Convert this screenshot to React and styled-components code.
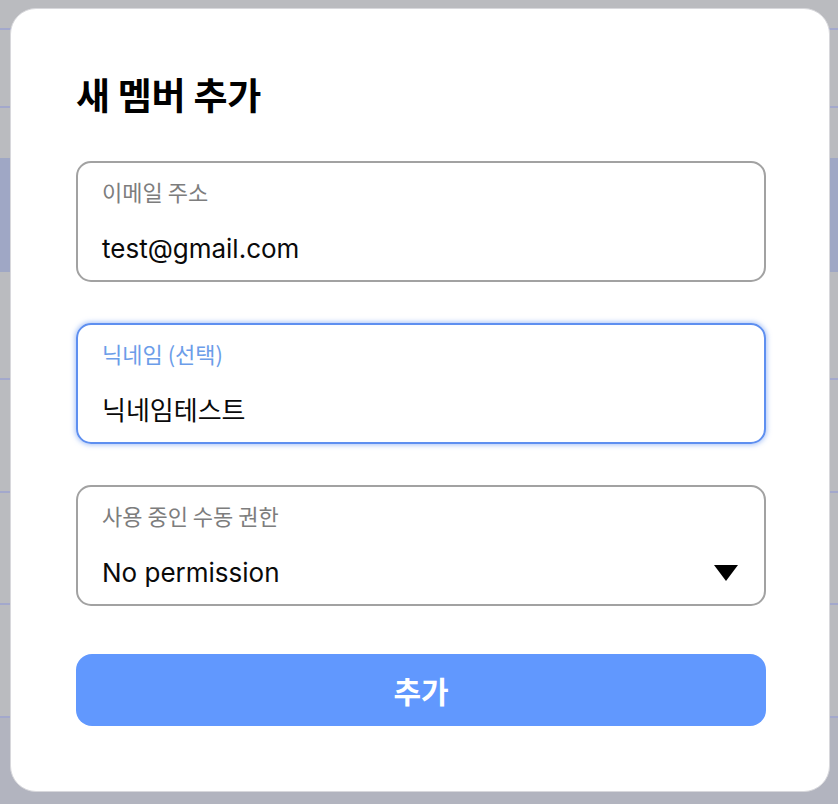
import React from 'react'
import styled, { createGlobalStyle } from 'styled-components'

const GlobalStyle = createGlobalStyle`
  html, body {
    margin: 0;
    padding: 0;
    background: #babbbf;
  }
  * {
    box-sizing: border-box;
  }
`

const sans = `Inter, "Noto Sans CJK KR", sans-serif`
const kr = `"Noto Sans CJK KR", "Noto Sans", sans-serif`

export const Backdrop = styled.div`
  position: fixed;
  inset: 0;
  display: flex;
  flex-direction: column;
  background: #babbbf;
`
export const TableRow = styled.div`
  height: ${p => p.h}px;
  flex-shrink: 0;
  background: ${p => (p.selected ? '#9fa7c5' : p.tail ? '#b2b4bf' : '#babbbf')};
  border-bottom: ${p => (p.line ? '2px solid #a3a8cc' : 'none')};
`
export const Overlay = styled.div`
  position: fixed;
  inset: 0;
  display: flex;
  padding: 8px 8px 12px 10px;
`
export const Modal = styled.div`
  width: 820px;
  height: 784px;
  background: #fff;
  border: 1px solid #d8d8dc;
  border-radius: 26px;
  padding: 59px 63px 0 65px;
  display: flex;
  flex-direction: column;
`
export const Title = styled.h2`
  margin: 0 0 41px;
  font-family: ${kr};
  font-weight: 700;
  font-size: 37px;
  line-height: 52px;
  color: #000;
  letter-spacing: -0.3px;
`
export const Field = styled.div`
  height: 121px;
  border: 2px solid ${p => (p.focused ? '#5e8ff0' : '#a2a2a2')};
  border-radius: 15px;
  box-shadow: ${p => (p.focused ? '0 0 5px 1px rgba(94,143,240,0.55)' : 'none')};
  padding: 12px 24px 0 24px;
  margin-bottom: ${p => p.gap}px;
  display: flex;
  flex-direction: column;
`
export const Label = styled.div`
  font-family: ${kr};
  font-size: 22px;
  line-height: 32px;
  color: ${p => (p.focused ? '#6c9de9' : '#7d7d7d')};
`
export const ValueRow = styled.div`
  margin-top: 24px;
  display: flex;
  align-items: center;
  justify-content: space-between;
`
export const Value = styled.div`
  font-family: ${sans};
  font-size: 26px;
  line-height: 36px;
  color: #0a0a0a;
`
export const Caret = styled.span`
  width: 0;
  height: 0;
  margin-right: 2px;
  border-left: 12px solid transparent;
  border-right: 12px solid transparent;
  border-top: 16px solid #000;
`
export const SubmitButton = styled.button`
  height: 72px;
  border: none;
  border-radius: 16px;
  background: #6198fe;
  color: #fff;
  font-family: ${kr};
  font-weight: 700;
  font-size: 30px;
  cursor: pointer;
`

const rows = [
  { h: 30, line: true },
  { h: 78, line: true },
  { h: 50 },
  { h: 114, selected: true },
  { h: 108, line: true },
  { h: 113, line: true },
  { h: 112, line: true },
  { h: 113, line: true },
  { h: 100, tail: true },
]

export default function App() {
  return (
    <>
      <GlobalStyle />
      <Backdrop>
        {rows.map((r, i) => (
          <TableRow key={i} {...r} />
        ))}
      </Backdrop>
      <Overlay>
        <Modal>
          <Title>새 멤버 추가</Title>
          <Field gap={41}>
            <Label>이메일 주소</Label>
            <ValueRow>
              <Value>test@gmail.com</Value>
            </ValueRow>
          </Field>
          <Field focused gap={41}>
            <Label focused>닉네임 (선택)</Label>
            <ValueRow>
              <Value>닉네임테스트</Value>
            </ValueRow>
          </Field>
          <Field gap={48}>
            <Label>사용 중인 수동 권한</Label>
            <ValueRow>
              <Value>No permission</Value>
              <Caret />
            </ValueRow>
          </Field>
          <SubmitButton>추가</SubmitButton>
        </Modal>
      </Overlay>
    </>
  )
}
